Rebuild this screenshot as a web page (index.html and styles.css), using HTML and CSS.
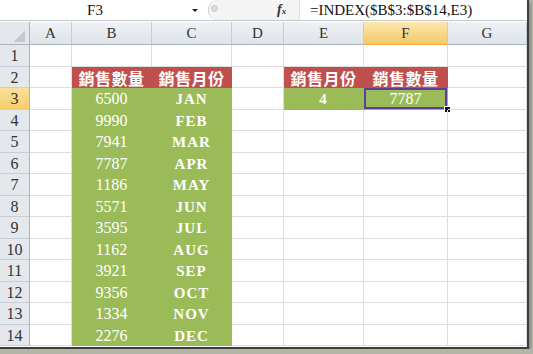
FILE: index.html
```html
<!DOCTYPE html>
<html lang="zh-Hant">
<head>
    <meta charset="UTF-8">
    <meta name="viewport" content="width=device-width, initial-scale=1.0">
    <title>INDEX 查詢</title>
    <link rel="stylesheet" href="styles.css">
</head>
<body>
    <div class="window">
        <div class="formula-bar">
            <div class="name-box">F3</div>
            <div class="name-arrow"></div>
            <div class="fx-area">
                <span class="grip"><span class="dot"></span></span>
                <span class="fx"><i>f</i><small>x</small></span>
            </div>
            <div class="formula">=INDEX($B$3:$B$14,E3)</div>
        </div>

        <div class="sheet">
            <!-- column headers -->
            <div class="corner"><span class="tri"></span></div>
            <div class="ch">A</div>
            <div class="ch">B</div>
            <div class="ch">C</div>
            <div class="ch">D</div>
            <div class="ch">E</div>
            <div class="ch active">F</div>
            <div class="ch">G</div>

            <div class="rh">1</div>
            <div class="c"></div><div class="c"></div><div class="c"></div><div class="c"></div><div class="c"></div><div class="c"></div><div class="c"></div>

            <div class="rh">2</div>
            <div class="c"></div>
            <div class="c red">銷售數量</div>
            <div class="c red">銷售月份</div>
            <div class="c"></div>
            <div class="c red">銷售月份</div>
            <div class="c red">銷售數量</div>
            <div class="c"></div>

            <div class="rh active">3</div>
            <div class="c"></div>
            <div class="c green">6500</div>
            <div class="c green mon">JAN</div>
            <div class="c"></div>
            <div class="c green mon">4</div>
            <div class="c green sel">7787</div>
            <div class="c"></div>

            <div class="rh">4</div>
            <div class="c"></div><div class="c green">9990</div><div class="c green mon">FEB</div>
            <div class="c"></div><div class="c"></div><div class="c"></div><div class="c"></div>

            <div class="rh">5</div>
            <div class="c"></div><div class="c green">7941</div><div class="c green mon">MAR</div>
            <div class="c"></div><div class="c"></div><div class="c"></div><div class="c"></div>

            <div class="rh">6</div>
            <div class="c"></div><div class="c green">7787</div><div class="c green mon">APR</div>
            <div class="c"></div><div class="c"></div><div class="c"></div><div class="c"></div>

            <div class="rh">7</div>
            <div class="c"></div><div class="c green">1186</div><div class="c green mon">MAY</div>
            <div class="c"></div><div class="c"></div><div class="c"></div><div class="c"></div>

            <div class="rh">8</div>
            <div class="c"></div><div class="c green">5571</div><div class="c green mon">JUN</div>
            <div class="c"></div><div class="c"></div><div class="c"></div><div class="c"></div>

            <div class="rh">9</div>
            <div class="c"></div><div class="c green">3595</div><div class="c green mon">JUL</div>
            <div class="c"></div><div class="c"></div><div class="c"></div><div class="c"></div>

            <div class="rh">10</div>
            <div class="c"></div><div class="c green">1162</div><div class="c green mon">AUG</div>
            <div class="c"></div><div class="c"></div><div class="c"></div><div class="c"></div>

            <div class="rh">11</div>
            <div class="c"></div><div class="c green">3921</div><div class="c green mon">SEP</div>
            <div class="c"></div><div class="c"></div><div class="c"></div><div class="c"></div>

            <div class="rh">12</div>
            <div class="c"></div><div class="c green">9356</div><div class="c green mon">OCT</div>
            <div class="c"></div><div class="c"></div><div class="c"></div><div class="c"></div>

            <div class="rh">13</div>
            <div class="c"></div><div class="c green">1334</div><div class="c green mon">NOV</div>
            <div class="c"></div><div class="c"></div><div class="c"></div><div class="c"></div>

            <div class="rh">14</div>
            <div class="c"></div><div class="c green">2276</div><div class="c green mon">DEC</div>
            <div class="c"></div><div class="c"></div><div class="c"></div><div class="c"></div>
        </div>
    </div>
</body>
</html>
```

FILE: styles.css
```css
body {
    margin: 0;
    padding: 0;
    background-color: #b3b6a4;
    font-family: "Liberation Serif", "Noto Sans CJK TC", serif;
    overflow: hidden;
}
.window {
    width: 527px;
    height: 347px;
    background-color: #fff;
    border-right: 2px solid #3d3d3d;
    border-bottom: 2px solid #3d3d3d;
    box-shadow: 2px 2px 3px #8a8e7a;
    overflow: hidden;
}

/* formula bar */
.formula-bar {
    display: flex;
    height: 20px;
    border-bottom: 1px solid #c4c8cc;
    margin-bottom: 1px;
}
.name-box {
    width: 190px;
    text-align: center;
    font-size: 15px;
    line-height: 21px;
    color: #111;
}
.name-arrow {
    width: 0;
    height: 0;
    margin: 9px 10px 0 2px;
    border-left: 3px solid transparent;
    border-right: 3px solid transparent;
    border-top: 3px solid #222;
}
.fx-area {
    display: flex;
    align-items: center;
    width: 90px;
    background-color: #f4f4f4;
    border-left: 1px solid #cfd2d6;
    border-radius: 9px 0 0 9px;
}
.grip {
    display: flex;
    align-items: center;
    justify-content: center;
    width: 10px;
    height: 18px;
}
.dot {
    width: 5px;
    height: 5px;
    border-radius: 50%;
    background-color: #dcdcdc;
    border: 1px solid #c8c8c8;
    margin-top: -4px;
}
.fx {
    margin-left: 58px;
    font-size: 14px;
    font-weight: bold;
    color: #333;
}
.fx small {
    font-size: 9px;
    font-style: italic;
}
.formula {
    flex: 1;
    padding-left: 10px;
    font-size: 15px;
    line-height: 21px;
    color: #111;
    border-left: 1px solid #e2e2e2;
}

/* sheet grid */
.sheet {
    display: grid;
    grid-template-columns: 30px 42px 80px 80px 52px 80px 84px 79px;
    grid-template-rows: 23px;
    grid-auto-rows: 21.5px;
}
.corner {
    display: flex;
    align-items: flex-end;
    justify-content: flex-end;
    padding: 0 4px 2px 0;
    background-color: #e4e8ed;
    border-right: 1px solid #a9b4c1;
    border-bottom: 1px solid #a9b4c1;
}
.tri {
    width: 12px;
    height: 12px;
    background: linear-gradient(to top left, #c4c7cb 50%, transparent 50%);
}
.ch {
    text-align: center;
    font-size: 15px;
    line-height: 23px;
    color: #333;
    background: linear-gradient(#eef1f5, #dfe4ea);
    border-right: 1px solid #c4ccd6;
    border-bottom: 1px solid #a9b4c1;
}
.ch.active {
    background: linear-gradient(#fbe8b0, #f4c868);
    border-bottom: 1px solid #f0a640;
}
.rh {
    text-align: center;
    font-size: 16px;
    line-height: 22px;
    color: #333;
    background-color: #e4e8ed;
    border-right: 1px solid #a9b4c1;
    border-bottom: 1px solid #c7ced7;
}
.rh.active {
    background: linear-gradient(#fae19a, #f4cc6c);
    border-right: 1px solid #f0a640;
}
.c {
    position: relative;
    text-align: center;
    font-size: 16px;
    line-height: 22px;
    color: #fff;
    border-right: 1px solid #dadcdd;
    border-bottom: 1px solid #dadcdd;
}
.red {
    background-color: #c0504d;
    border-color: #c0504d;
    font-family: "Noto Sans CJK TC", sans-serif;
    font-weight: bold;
    font-size: 16px;
    letter-spacing: 0.5px;
}
.green {
    background-color: #9bbb59;
    border-color: #9bbb59;
}
.mon {
    font-weight: bold;
    font-size: 15px;
    letter-spacing: 1px;
}
.sel {
    box-shadow: inset 0 0 0 2px #5a3d9e;
}
.sel::after {
    content: "";
    position: absolute;
    right: -3px;
    bottom: -3px;
    width: 5px;
    height: 5px;
    background-color: #111;
    border: 1px solid #fff;
    border-width: 1px 0 0 1px;
}
```
